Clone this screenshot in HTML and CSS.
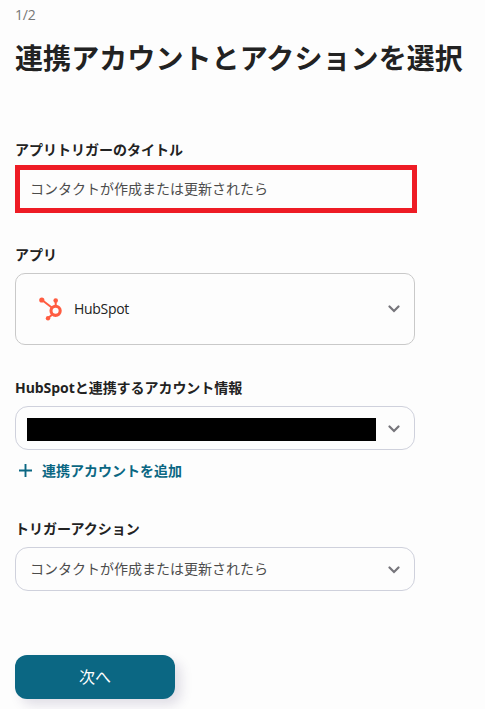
FILE: index.html
```
<!DOCTYPE html>
<html lang="ja">

<head>
	<meta charset="utf-8">
	<title>連携アカウントとアクションを選択</title>
	<link rel="stylesheet" href="styles.css">
</head>

<body>
	<form class="container">
		<p class="step">1/2</p>
		<h1 class="title">連携アカウントとアクションを選択</h1>

		<div class="field field-title">
			<label class="label" for="trigger_title">アプリトリガーのタイトル</label>
			<input id="trigger_title" name="trigger_title" class="input" type="text" value="コンタクトが作成または更新されたら" />
		</div>

		<div class="field field-app">
			<div class="label">アプリ</div>
			<div class="select select-app">
				<svg class="logo" width="24" height="24" viewBox="0 0 24 24" fill="none" stroke="#ff5c41">
					<path d="M3 3L14 11.5M16.7 4V10M12.7 18L9 21.2" stroke-width="2" />
					<circle cx="16.6" cy="13.8" r="4.6" stroke-width="3.1" />
					<g fill="#ff5c41" stroke="none">
						<circle cx="2.8" cy="3" r="2.6" />
						<circle cx="16.7" cy="3.5" r="2.3" />
						<circle cx="9" cy="21.2" r="2.2" />
					</g>
				</svg>
				<span class="value app-name">HubSpot</span>
				<svg class="arrow" width="12" height="8" viewBox="0 0 12 8">
					<path d="M1.5 1.5L6 6L10.5 1.5" />
				</svg>
			</div>
		</div>

		<div class="field field-account">
			<div class="label">HubSpotと連携するアカウント情報</div>
			<div class="select select-account">
				<span class="masked"></span>
				<svg class="arrow" width="12" height="8" viewBox="0 0 12 8">
					<path d="M1.5 1.5L6 6L10.5 1.5" />
				</svg>
			</div>
			<a class="add">
				<svg width="13" height="13" viewBox="0 0 13 13">
					<path d="M6.5 0V13M0 6.5H13" stroke="#0b6783" stroke-width="1.9" />
				</svg>
				連携アカウントを追加
			</a>
		</div>

		<div class="field">
			<div class="label">トリガーアクション</div>
			<div class="select">
				<span class="value muted">コンタクトが作成または更新されたら</span>
				<svg class="arrow" width="12" height="8" viewBox="0 0 12 8">
					<path d="M1.5 1.5L6 6L10.5 1.5" />
				</svg>
			</div>
		</div>

		<button class="button" type="button">次へ</button>
	</form>
</body>

</html>
```
FILE: styles.css
```
* {
	box-sizing: border-box;
}

body {
	margin: 0;
	height: 709px;
	overflow: hidden;
	background-color: #fdfdfd;
	color: #222;
	font-family: "Open Sans", "Noto Sans CJK JP", sans-serif;
	font-size: 14px;
}

.container {
	padding: 5px 15px 0;
}

.step {
	margin: 0;
	color: #777;
	letter-spacing: -0.2px;
	line-height: 20px;
}

.title {
	margin: 13px 0 62px;
	font-size: 28px;
	font-weight: bold;
	letter-spacing: 0.08px;
	line-height: 40px;
	white-space: nowrap;
}

.field {
	width: 400px;
}

.label {
	display: block;
	height: 20px;
	margin-bottom: 8px;
	font-weight: bold;
	line-height: 20px;
}

.input {
	display: block;
	width: 402px;
	height: 48px;
	padding: 0 10px 2px;
	border: 5px solid #ee1c25;
	background-color: #fdfdfd;
	color: #4c4c4c;
	font: inherit;
	outline: none;
}

.field-title {
	margin-bottom: 32px;
}

.field-title .label {
	margin-bottom: 5px;
}

.select {
	display: flex;
	align-items: center;
	height: 44px;
	padding: 0 14px;
	border: 1px solid #cfd1dc;
	border-radius: 13px;
}

.select-app {
	height: 72px;
	padding-left: 23px;
	border-color: #c9c9c9;
	border-radius: 10px;
}

.logo {
	margin-right: 11px;
}

.value {
	flex: 1;
	padding-bottom: 2px;
}

.app-name {
	letter-spacing: -0.3px;
}

.muted {
	color: #4c4c4c;
}

.arrow {
	margin: 1px 0 0 auto;
	fill: none;
	stroke: #76757b;
	stroke-width: 2.2;
	stroke-linecap: round;
}

.select-app .arrow {
	margin-top: 0;
}

.field-app {
	margin-bottom: 33px;
}

.select-account {
	padding-left: 11px;
}

.masked {
	width: 349px;
	height: 23px;
	margin-top: 2px;
	background-color: #000;
}

.select-account .arrow {
	margin-top: 2px;
}

.field-account {
	margin-bottom: 39px;
}

.field-account .label {
	letter-spacing: -0.05px;
}

.add {
	display: flex;
	align-items: center;
	gap: 10px;
	height: 20px;
	margin: 10px 0 0 4px;
	padding-bottom: 1px;
	color: #0b6783;
	font-weight: bold;
}

.add svg {
	margin-top: 2px;
}

.button {
	display: block;
	width: 160px;
	height: 44px;
	margin-top: 64px;
	padding: 0 0 2px;
	border: none;
	border-radius: 12px;
	background-color: #0b6783;
	box-shadow: 6px 6px 12px rgba(60, 50, 100, 0.15);
	color: #fff;
	font-family: inherit;
	font-size: 16px;
}
```
